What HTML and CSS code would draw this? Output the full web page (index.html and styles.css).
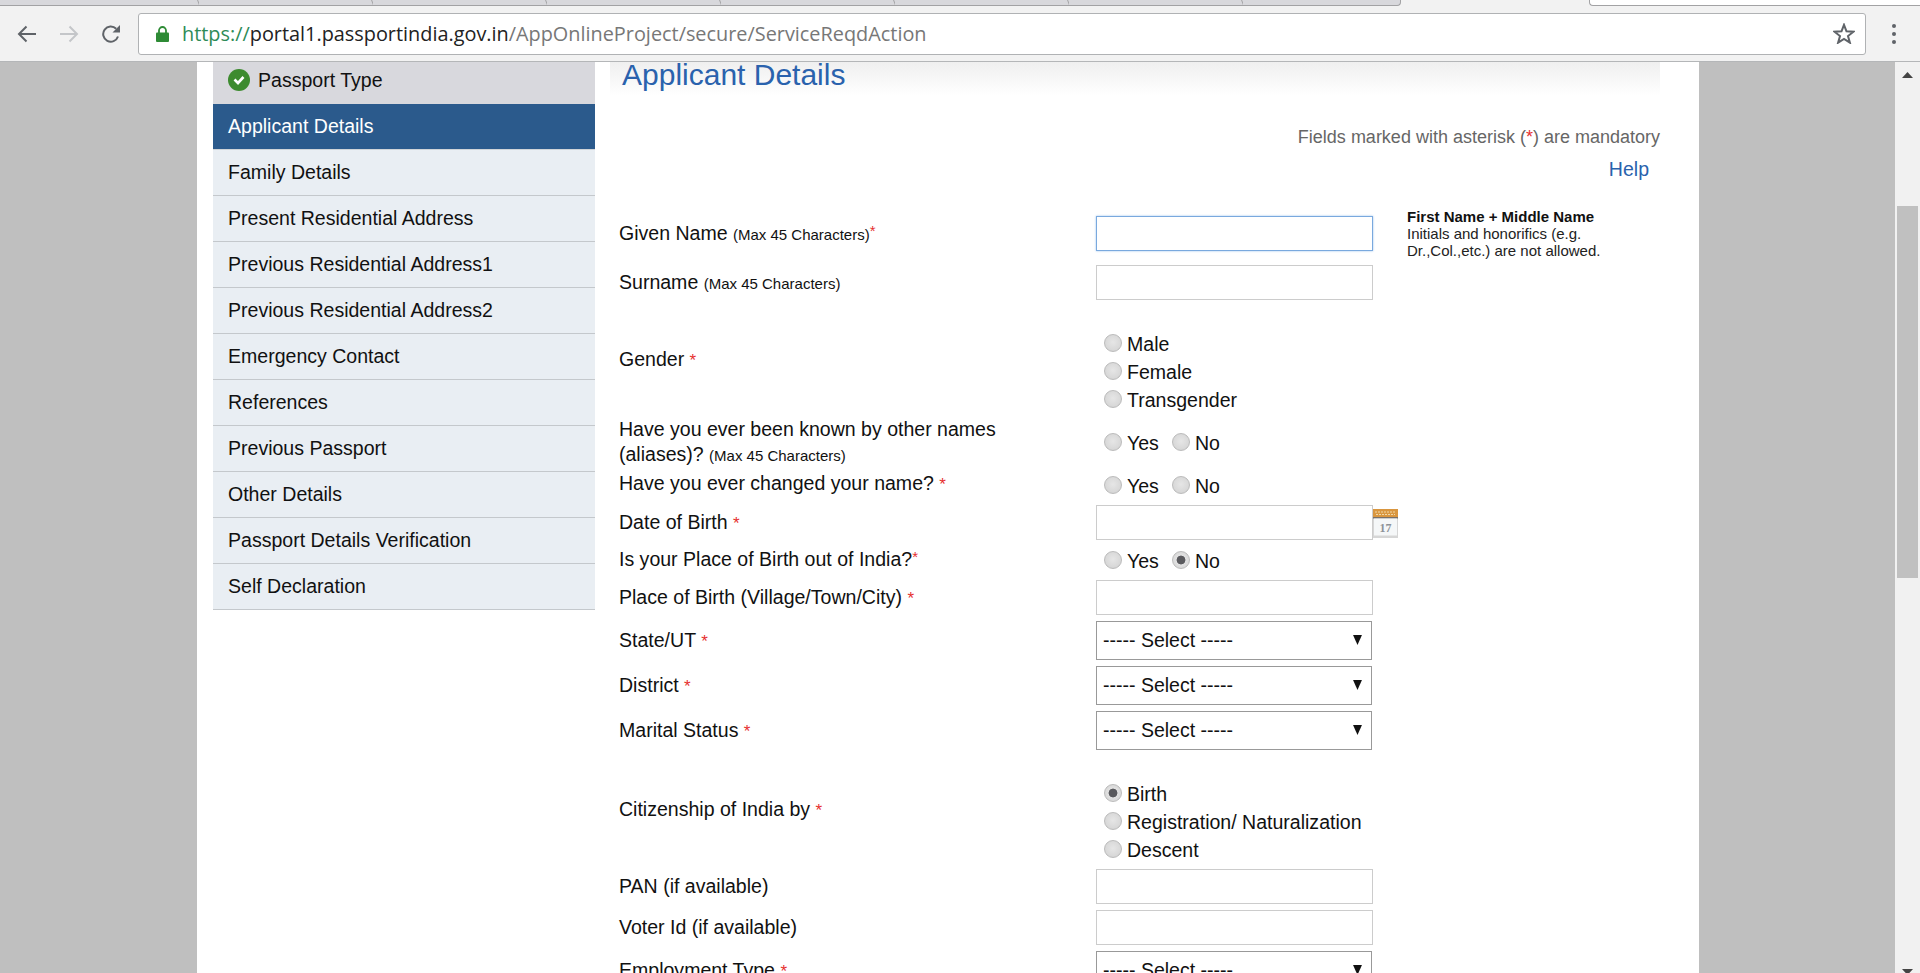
FILE: index.html
```html
<!DOCTYPE html>
<html lang="en">
<head>
<meta charset="utf-8">
<title>Applicant Details</title>
<link rel="stylesheet" href="styles.css">
</head>
<body>
<header class="chrome">
  <div class="tabstrip">
    <div class="tab tab-first"></div>
    <div class="tab"></div>
    <div class="tab"></div>
    <div class="tab"></div>
    <div class="tab"></div>
    <div class="tab"></div>
    <div class="tab"></div>
    <div class="tab tab-last"></div>
    <div class="tab-active"></div>
    <div class="tab-rest"></div>
  </div>
  <div class="toolbar">
    <svg class="nav-icon" viewBox="0 0 20 18"><path d="M19 9H2M9.500 1.500 2 9l7.500 7.500" fill="none" stroke="#5f6368" stroke-width="2"/></svg>
    <svg class="nav-icon nav-forward" viewBox="0 0 20 18"><path d="M1 9h17M10.500 1.500 18 9l-7.500 7.500" fill="none" stroke="#c4c6c9" stroke-width="2"/></svg>
    <svg class="nav-icon nav-reload" viewBox="0 0 20 18"><path d="M17 11.500A7.600 7.600 0 1 1 15.200 3.700" fill="none" stroke="#5f6368" stroke-width="2"/><path d="M19 0v7.500h-7.500z" fill="#5f6368"/></svg>
    <div class="omnibox">
      <svg class="lock" viewBox="0 0 13 16"><path d="M3 7V4.500a3.500 3.500 0 0 1 7 0V7" fill="none" stroke="#2e8b35" stroke-width="1.800"/><rect y="6.500" width="13" height="9.500" rx="1" fill="#2e8b35"/></svg>
      <span class="url"><span class="url-scheme">https://</span><span class="url-host">portal1.passportindia.gov.in</span><span class="url-path">/AppOnlineProject/secure/ServiceReqdAction</span></span>
      <svg class="star" viewBox="0 0 22 21"><path d="M11 1.800 13.500 8.300 20.500 8.700 15 13 16.900 19.700 11 16 5.100 19.700 7 13 1.500 8.700 8.500 8.300z" fill="none" stroke="#5f6368" stroke-width="2"/></svg>
    </div>
    <div class="menu-dots"><i></i><i></i><i></i></div>
  </div>
</header>

<div class="viewport">
  <div class="page">
    <nav class="sidebar">
      <div class="side-item side-done">
        <svg class="done-icon" viewBox="0 0 22 22"><circle cx="11" cy="11" r="11" fill="#3d8b2f"/><path d="M6.500 10.500 10 14l5.500-6" fill="none" stroke="#fff" stroke-width="2.600"/></svg>
        Passport Type
      </div>
      <div class="side-item side-active">Applicant Details</div>
      <div class="side-item">Family Details</div>
      <div class="side-item">Present Residential Address</div>
      <div class="side-item">Previous Residential Address1</div>
      <div class="side-item">Previous Residential Address2</div>
      <div class="side-item">Emergency Contact</div>
      <div class="side-item">References</div>
      <div class="side-item">Previous Passport</div>
      <div class="side-item">Other Details</div>
      <div class="side-item">Passport Details Verification</div>
      <div class="side-item">Self Declaration</div>
    </nav>

    <main class="content">
      <h1 class="title">Applicant Details</h1>
      <p class="mandatory">Fields marked with asterisk (<span class="req">*</span>) are mandatory</p>
      <p class="help-line"><a class="help" href="#">Help</a></p>

      <form class="form">
        <div class="row row-input gap-s">
          <label class="label">Given Name <small>(Max 45 Characters)</small><sup class="req">*</sup></label>
          <input class="text focus" type="text">
          <div class="hint"><b>First Name + Middle Name</b><br>Initials and honorifics (e.g. Dr.,Col.,etc.) are not allowed.</div>
        </div>
        <div class="row row-input gap-l">
          <label class="label">Surname <small>(Max 45 Characters)</small></label>
          <input class="text" type="text">
        </div>
        <div class="row row-group">
          <label class="label label-top">Gender <span class="req">*</span></label>
          <div class="radios">
            <label class="radio-line"><input class="radio" type="radio" name="g">Male</label>
            <label class="radio-line"><input class="radio" type="radio" name="g">Female</label>
            <label class="radio-line"><input class="radio" type="radio" name="g">Transgender</label>
          </div>
        </div>
        <div class="row row-alias tight">
          <label class="label label-wrap">Have you ever been known by other names (aliases)? <small>(Max 45 Characters)</small></label>
          <div class="radio-line">
            <label class="radio-opt"><input class="radio" type="radio" name="a">Yes</label>
            <label class="radio-opt"><input class="radio" type="radio" name="a">No</label>
          </div>
        </div>
        <div class="row row-radio-s">
          <label class="label">Have you ever changed your name? <span class="req">*</span></label>
          <div class="radio-line">
            <label class="radio-opt"><input class="radio" type="radio" name="c">Yes</label>
            <label class="radio-opt"><input class="radio" type="radio" name="c">No</label>
          </div>
        </div>
        <div class="row row-input">
          <label class="label">Date of Birth <span class="req">*</span></label>
          <input class="text" type="text">
          <svg class="cal" viewBox="0 0 25 29">
            <rect width="25" height="29" fill="#d6d6d6"/>
            <rect width="25" height="8" fill="#d9963f"/>
            <path d="M2 3h21M3 5.500h19" stroke="#f0d8a8" stroke-width="1" stroke-dasharray="2 1"/>
            <rect y="8" width="25" height="1.500" fill="#77706a"/>
            <rect x="1" y="9.500" width="23" height="17" fill="#f5f7f8"/>
            <text class="cal-num" x="12.500" y="23">17</text>
          </svg>
        </div>
        <div class="row row-radio">
          <label class="label">Is your Place of Birth out of India?<sup class="req">*</sup></label>
          <div class="radio-line">
            <label class="radio-opt"><input class="radio" type="radio" name="o">Yes</label>
            <label class="radio-opt"><input class="radio" type="radio" name="o" checked>No</label>
          </div>
        </div>
        <div class="row row-input">
          <label class="label">Place of Birth (Village/Town/City) <span class="req">*</span></label>
          <input class="text" type="text">
        </div>
        <div class="row row-select">
          <label class="label">State/UT <span class="req">*</span></label>
          <div class="select-wrap"><select class="select"><option>----- Select -----</option></select><svg class="caret" viewBox="0 0 8 9"><path d="M0 0h8L4 9z"/></svg></div>
        </div>
        <div class="row row-select">
          <label class="label">District <span class="req">*</span></label>
          <div class="select-wrap"><select class="select"><option>----- Select -----</option></select><svg class="caret" viewBox="0 0 8 9"><path d="M0 0h8L4 9z"/></svg></div>
        </div>
        <div class="row row-select gap-l">
          <label class="label">Marital Status <span class="req">*</span></label>
          <div class="select-wrap"><select class="select"><option>----- Select -----</option></select><svg class="caret" viewBox="0 0 8 9"><path d="M0 0h8L4 9z"/></svg></div>
        </div>
        <div class="row row-group">
          <label class="label label-top">Citizenship of India by <span class="req">*</span></label>
          <div class="radios">
            <label class="radio-line"><input class="radio" type="radio" name="z" checked>Birth</label>
            <label class="radio-line"><input class="radio" type="radio" name="z">Registration/ Naturalization</label>
            <label class="radio-line"><input class="radio" type="radio" name="z">Descent</label>
          </div>
        </div>
        <div class="row row-input">
          <label class="label">PAN (if available)</label>
          <input class="text" type="text">
        </div>
        <div class="row row-input">
          <label class="label">Voter Id (if available)</label>
          <input class="text" type="text">
        </div>
        <div class="row row-select">
          <label class="label">Employment Type <span class="req">*</span></label>
          <div class="select-wrap"><select class="select"><option>----- Select -----</option></select><svg class="caret" viewBox="0 0 8 9"><path d="M0 0h8L4 9z"/></svg></div>
        </div>
      </form>
    </main>
  </div>

  <div class="scrollbar">
    <svg class="sb-arrow" viewBox="0 0 11 6"><path d="M0 6 5.500 0 11 6z"/></svg>
    <div class="sb-thumb"></div>
    <svg class="sb-arrow sb-down" viewBox="0 0 11 6"><path d="M0 0h11L5.500 6z"/></svg>
  </div>
</div>
</body>
</html>
```
FILE: styles.css
```css
* { box-sizing: border-box; }
html, body { margin: 0; height: 973px; overflow: hidden; }
body { font-family: "Liberation Sans", Arial, sans-serif; color: #111; background: #bfbfbf; }

/* browser chrome */
.chrome { height: 62px; background: #f2f2f2; border-bottom: 1px solid #b4b6b8; }
.tabstrip { display: flex; height: 6px; }
.tab { width: 174px; background: #d8d8dc; border-bottom: 1px solid #a2a2a4; position: relative; }
.tab::after { content: ""; position: absolute; right: 0; top: 0; bottom: 0; width: 1px; background: #a2a2a4; transform: skewX(20deg); }
.tab-first { width: 199px; }
.tab-last { width: 158px; border-bottom-right-radius: 4px; border-right: 1px solid #a2a2a4; }
.tab-last::after { display: none; }
.tab-active { width: 188px; background: #f2f2f2; }
.tab-rest { flex: 1; background: #fff; border-bottom: 1px solid #a2a2a4; border-left: 1px solid #a2a2a4; border-bottom-left-radius: 4px; }
.toolbar { display: flex; align-items: center; height: 55px; padding-left: 17px; }
.nav-icon { width: 20px; height: 18px; flex: none; }
.nav-forward { margin-left: 22px; }
.nav-reload { margin-left: 22px; }
.omnibox { display: flex; align-items: center; width: 1728px; height: 42px; margin-left: 17px; background: #fff; border: 1px solid #b0b2b4; border-radius: 3px; padding-left: 17px; }
.lock { width: 13px; height: 16px; flex: none; }
.url { font-family: "Open Sans", sans-serif; font-size: 19.870px; margin-left: 13px; white-space: nowrap; }
.url-scheme { color: #2e8b57; }
.url-host { color: #222; }
.url-path { color: #777; }
.star { width: 22px; height: 21px; margin-left: auto; margin-right: 10px; flex: none; }
.menu-dots { display: flex; flex-direction: column; gap: 4px; margin-left: 26px; }
.menu-dots i { width: 4px; height: 4px; border-radius: 50%; background: #5f6368; }

/* viewport */
.viewport { display: flex; justify-content: space-between; height: 911px; overflow: hidden; }
.page { display: flex; width: 1502px; margin-left: 197px; background: #fff; padding-left: 16px; overflow: hidden; }

/* sidebar */
.sidebar { width: 382px; flex: none; font-size: 19.550px; }
.side-item { display: flex; align-items: center; height: 46px; padding-left: 15px; background: #e9eef3; border-bottom: 1px solid #c4c8cc; color: #111; }
.side-done { height: 42px; padding-bottom: 6px; background: #d8d8dd; border-bottom: 0; }
.side-active { background: #2b5a8c; color: #fff; border-bottom-color: #d0d4d8; }
.done-icon { width: 22px; height: 22px; margin-right: 8px; }

/* main */
.content { width: 1050px; margin-left: 15px; flex: none; }
.title { height: 33px; margin: 0; padding: 0 0 0 12px; font-size: 30px; font-weight: 400; line-height: 26px; color: #2a62ad; background: linear-gradient(#efefef, #fff); }
.mandatory { margin: 30px 0 0; font-size: 18px; line-height: 24px; text-align: right; color: #666; }
.help-line { margin: 8px 0 0; padding-right: 11px; font-size: 19.550px; line-height: 24px; text-align: right; }
.help { color: #2a62ad; text-decoration: none; }
.req { color: #e63030; }
.label .req { font-size: 17px; }
sup.req, .label sup.req { font-size: 15px; line-height: 0; vertical-align: 4px; }

/* form */
.form { display: flex; flex-direction: column; gap: 6px; margin-top: 35px; padding-left: 9px; font-size: 19.550px; }
.row { display: grid; grid-template-columns: 477px 277px 1fr; grid-template-rows: minmax(0, 1fr); align-items: center; }
.row-input { height: 35px; }
.row-select { height: 39px; }
.row-radio { height: 28px; }
.row-radio-s { height: 26px; }
.row-alias { height: 50px; }
.row-group { height: 84px; }
.gap-s { margin-bottom: 8px; }
.gap-l { margin-bottom: 23px; }
.tight { margin-top: -2px; }
.label { line-height: 25px; white-space: nowrap; }
.label-wrap { white-space: normal; width: 390px; }
.label-top { align-self: start; margin-top: 18px; }
.label small { font-size: 15px; }
.row-alias .radio-line { margin-top: 3px; }
.row-radio-s .label { margin-bottom: 5px; }
.row-radio-s .radio-line { margin-top: 1px; }
.row-radio .label { margin-bottom: 2px; }
.row-radio .radio-line { margin-top: 2px; }
.text { width: 277px; height: 35px; border: 1px solid #ccc; background: #fff; padding: 0; margin: 0; }
.text.focus { border: 1px solid #7aa9de; box-shadow: 0 0 2px #9cc3ee; outline: 0; }
.hint { align-self: start; margin: -8px 0 0 34px; width: 205px; font-size: 15px; line-height: 17px; color: #222; }
.hint b { color: #111; }
.cal { width: 25px; height: 29px; margin-top: 2px; }
.radios { display: flex; flex-direction: column; align-self: start; padding-top: 1.500px; }
.radio-line { display: flex; align-items: center; height: 28px; }
.radio-opt { display: flex; align-items: center; margin-right: 5px; }
.radio { appearance: none; width: 18px; height: 18px; margin: 0 5px 3px 8px; border: 1px solid #bbb; border-radius: 50%; background: radial-gradient(circle at 50% 45%, #e6e6e6 0, #d8d8d8 65%, #c6c6c6 100%); flex: none; }
.radio:checked { background: radial-gradient(circle, #5a5a5e 0, #5a5a5e 36%, #e2e2e2 42%, #d0d0d0 100%); }
.select-wrap { position: relative; width: 276px; height: 39px; }
.select { appearance: none; display: block; width: 276px; height: 39px; border: 1px solid #999; border-radius: 0; background: #fff; padding: 0 0 2px 6px; font-family: "Liberation Sans", Arial, sans-serif; font-size: 19.500px; color: #111; }
.caret { position: absolute; right: 10px; top: 14px; width: 9px; height: 10px; fill: #111; }
.cal-num { font-family: "Liberation Serif", serif; font-size: 12px; font-weight: 700; fill: #8e9398; text-anchor: middle; }

/* scrollbar */
.scrollbar { position: relative; width: 25px; background: #f1f1f1; flex: none; }
.sb-arrow { position: absolute; left: 7px; top: 10px; width: 11px; height: 6px; fill: #444; }
.sb-down { top: 907px; }
.sb-thumb { position: absolute; left: 2px; top: 144px; width: 21px; height: 372px; background: #c0c0c0; }
```
